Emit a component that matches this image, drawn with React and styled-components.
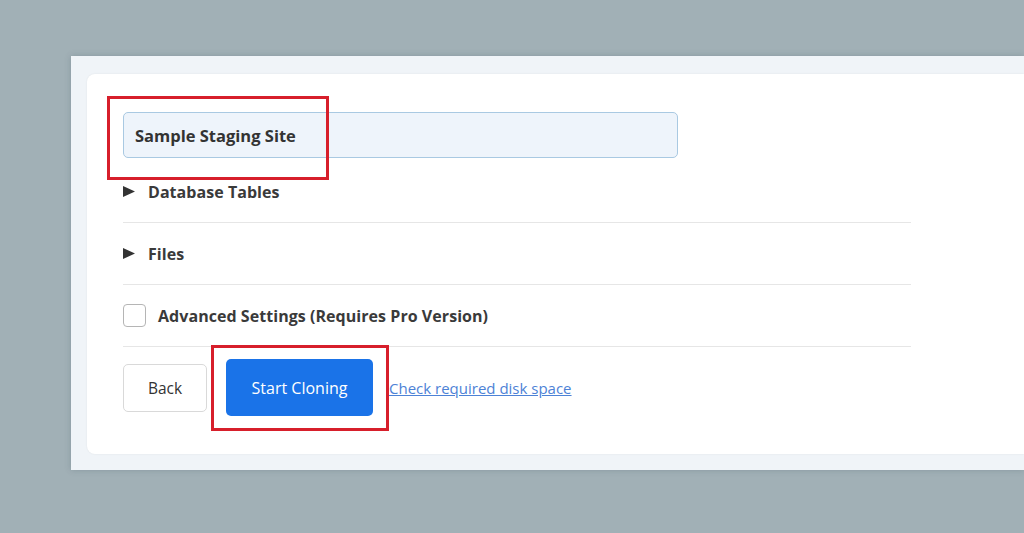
import React from "react";
import styled, { createGlobalStyle } from "styled-components";

const Global = createGlobalStyle`
  html, body { margin: 0; padding: 0; }
  body {
    background: #a1b0b6;
    font-family: "Open Sans", "Noto Sans", "Liberation Sans", sans-serif;
    overflow: hidden;
    width: 1024px;
    height: 533px;
  }
`;

const Page = styled.div`
  padding: 56px 0 0 71px;
`;

const Panel = styled.div`
  background: #f0f4f8;
  padding: 18px 0 16px 16px;
  box-shadow: 0 0 6px rgba(60, 80, 90, 0.25);
`;

const Card = styled.div`
  position: relative;
  background: #ffffff;
  border-radius: 8px 0 0 8px;
  padding: 38px 0 38px 36px;
  box-shadow: 0 0 2px rgba(0, 0, 0, 0.08);
`;

const NameInput = styled.div`
  box-sizing: border-box;
  width: 555px;
  height: 46px;
  background: #eef4fb;
  border: 1px solid #a9c9e2;
  border-radius: 5px;
  display: flex;
  align-items: center;
  padding-left: 11px;
  font-size: 16.5px;
  font-weight: 700;
  color: #333;
`;

const List = styled.div`
  width: 788px;
  margin-top: 3px;
`;

const Row = styled.div`
  box-sizing: border-box;
  height: 62px;
  display: flex;
  align-items: center;
  border-bottom: 1px solid #e6e6e6;
  font-size: 16px;
  letter-spacing: 0.05px;
  font-weight: 700;
  color: #3a3a3a;
  gap: ${(p) => p.$gap || 13}px;
`;

const Arrow = styled.svg`
  width: 12px;
  height: 11px;
  flex: none;
`;

const Checkbox = styled.span`
  box-sizing: border-box;
  width: 23px;
  height: 23px;
  border: 1px solid #b5b5b5;
  border-radius: 4px;
  background: #fff;
`;

const Actions = styled.div`
  display: flex;
  align-items: center;
  margin-top: 12px;
  height: 57px;
`;

const BackButton = styled.button`
  box-sizing: border-box;
  width: 84px;
  height: 48px;
  border: 1px solid #d9d9d9;
  border-radius: 5px;
  background: #fff;
  font-family: inherit;
  font-size: 15.5px;
  color: #333;
  margin-right: 19px;
`;

const StartButton = styled.button`
  box-sizing: border-box;
  width: 147px;
  height: 57px;
  border: none;
  border-radius: 5px;
  background: #1a73e8;
  color: #fff;
  font-family: inherit;
  font-size: 16px;
  margin-right: 16px;
`;

const Link = styled.a`
  color: #4d82d6;
  font-size: 15px;
  text-decoration: underline;
`;

const Highlight = styled.div`
  position: absolute;
  box-sizing: border-box;
  border: 3px solid #d71f2b;
  left: ${(p) => p.$x}px;
  top: ${(p) => p.$y}px;
  width: ${(p) => p.$w}px;
  height: ${(p) => p.$h}px;
  pointer-events: none;
`;

const Triangle = () => (
  <Arrow viewBox="0 0 12 11">
    <path d="M0 0 L12 5.5 L0 11 Z" fill="#333" />
  </Arrow>
);

export default function App() {
  return (
    <>
      <Global />
      <Page>
        <Panel>
          <Card>
            <NameInput>Sample Staging Site</NameInput>
            <List>
              <Row>
                <Triangle />
                Database Tables
              </Row>
              <Row>
                <Triangle />
                Files
              </Row>
              <Row $gap={12}>
                <Checkbox />
                Advanced Settings (Requires Pro Version)
              </Row>
            </List>
            <Actions>
              <BackButton>Back</BackButton>
              <StartButton>Start Cloning</StartButton>
              <Link href="#">Check required disk space</Link>
            </Actions>
            <Highlight $x={20} $y={22} $w={222} $h={84} />
            <Highlight $x={124} $y={271} $w={178} $h={86} />
          </Card>
        </Panel>
      </Page>
    </>
  );
}
